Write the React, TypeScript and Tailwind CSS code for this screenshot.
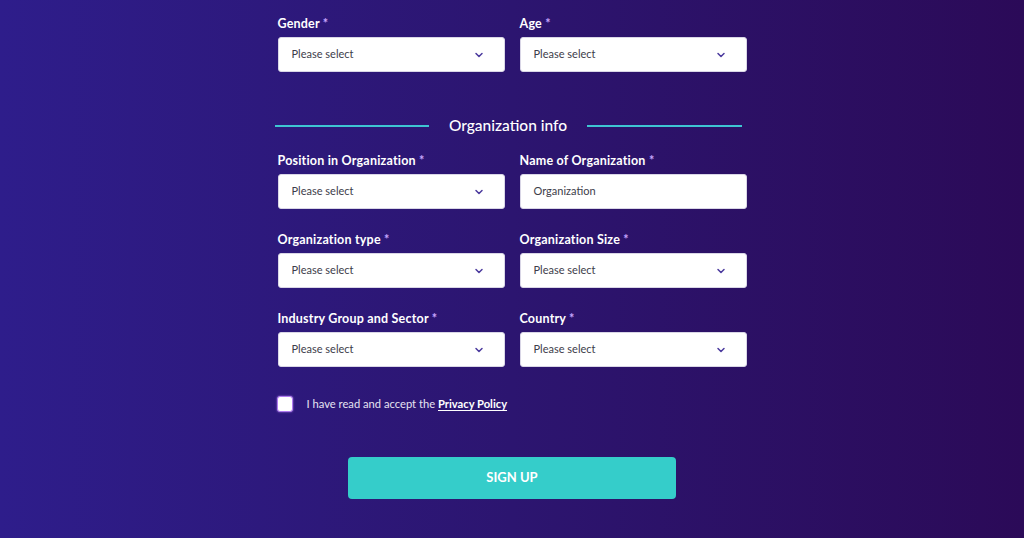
import { ChevronDown } from "lucide-react";

type Field = {
    label: string;
    value: string;
    select?: boolean;
};

const rows: Field[][] = [
    [
        { label: "Position in Organization", value: "Please select", select: true },
        { label: "Name of Organization", value: "Organization" },
    ],
    [
        { label: "Organization type", value: "Please select", select: true },
        { label: "Organization Size", value: "Please select", select: true },
    ],
    [
        { label: "Industry Group and Sector", value: "Please select", select: true },
        { label: "Country", value: "Please select", select: true },
    ],
];

function FormField({ field }: { field: Field }) {
    return (
        <div className="flex flex-col">
            <label className="text-[12.5px] leading-[18px] font-bold tracking-[0.2px] text-white mb-[4px]">
                {field.label} <span className="text-[#c8a6ff]">*</span>
            </label>
            <div className="h-[35px] bg-white rounded-[3px] border border-[#d9d6e6] flex items-center justify-between pl-[13px] pr-[19px]">
                <span className="text-[11px] text-[#3d3d4a]">{field.value}</span>
                {field.select && (
                    <ChevronDown className="w-[12px] h-[12px] text-[#4b3a9e]" strokeWidth={3} />
                )}
            </div>
        </div>
    );
}

export default function App() {
    return (
        <div
            className="w-full h-[538px] overflow-hidden bg-gradient-to-r from-[#2e1d8b] via-[#2c1570] to-[#2b0a58]"
            style={{ fontFamily: "Lato, 'Noto Sans', sans-serif" }}
        >
            <div className="w-[469px] mx-auto pt-[15px] flex flex-col">
                <div className="grid grid-cols-2 gap-x-[15px]">
                    <FormField field={{ label: "Gender", value: "Please select", select: true }} />
                    <FormField field={{ label: "Age", value: "Please select", select: true }} />
                </div>

                <div className="mt-[44px] mb-[16px] h-[20px] flex items-center -ml-[3px] mr-[5px]">
                    <div className="flex-1 h-[1.5px] bg-[#3ec5d2]" />
                    <span className="px-[20px] text-[15.5px] font-medium text-white">Organization info</span>
                    <div className="flex-1 h-[1.5px] bg-[#3ec5d2]" />
                </div>

                <div className="flex flex-col gap-y-[22px]">
                    {rows.map((row, i) => (
                        <div key={i} className="grid grid-cols-2 gap-x-[15px]">
                            {row.map((f) => (
                                <FormField key={f.label} field={f} />
                            ))}
                        </div>
                    ))}
                </div>

                <div className="mt-[29px] flex items-center gap-[14px] -ml-[1px]">
                    <div className="w-[16px] h-[16px] bg-white rounded-[3px] border border-[#b07cf0] shadow-[0_0_2px_#b07cf0]" />
                    <p className="text-[11.2px] text-[#e6e3f2]">
                        I have read and accept the{" "}
                        <a className="font-bold text-white underline underline-offset-2">Privacy Policy</a>
                    </p>
                </div>

                <div className="mt-[44px] flex justify-center">
                    <button className="w-[328px] h-[42px] rounded-[4px] bg-[#35cdca] text-white text-[13px] font-bold">
                        SIGN UP
                    </button>
                </div>
            </div>
        </div>
    );
}
